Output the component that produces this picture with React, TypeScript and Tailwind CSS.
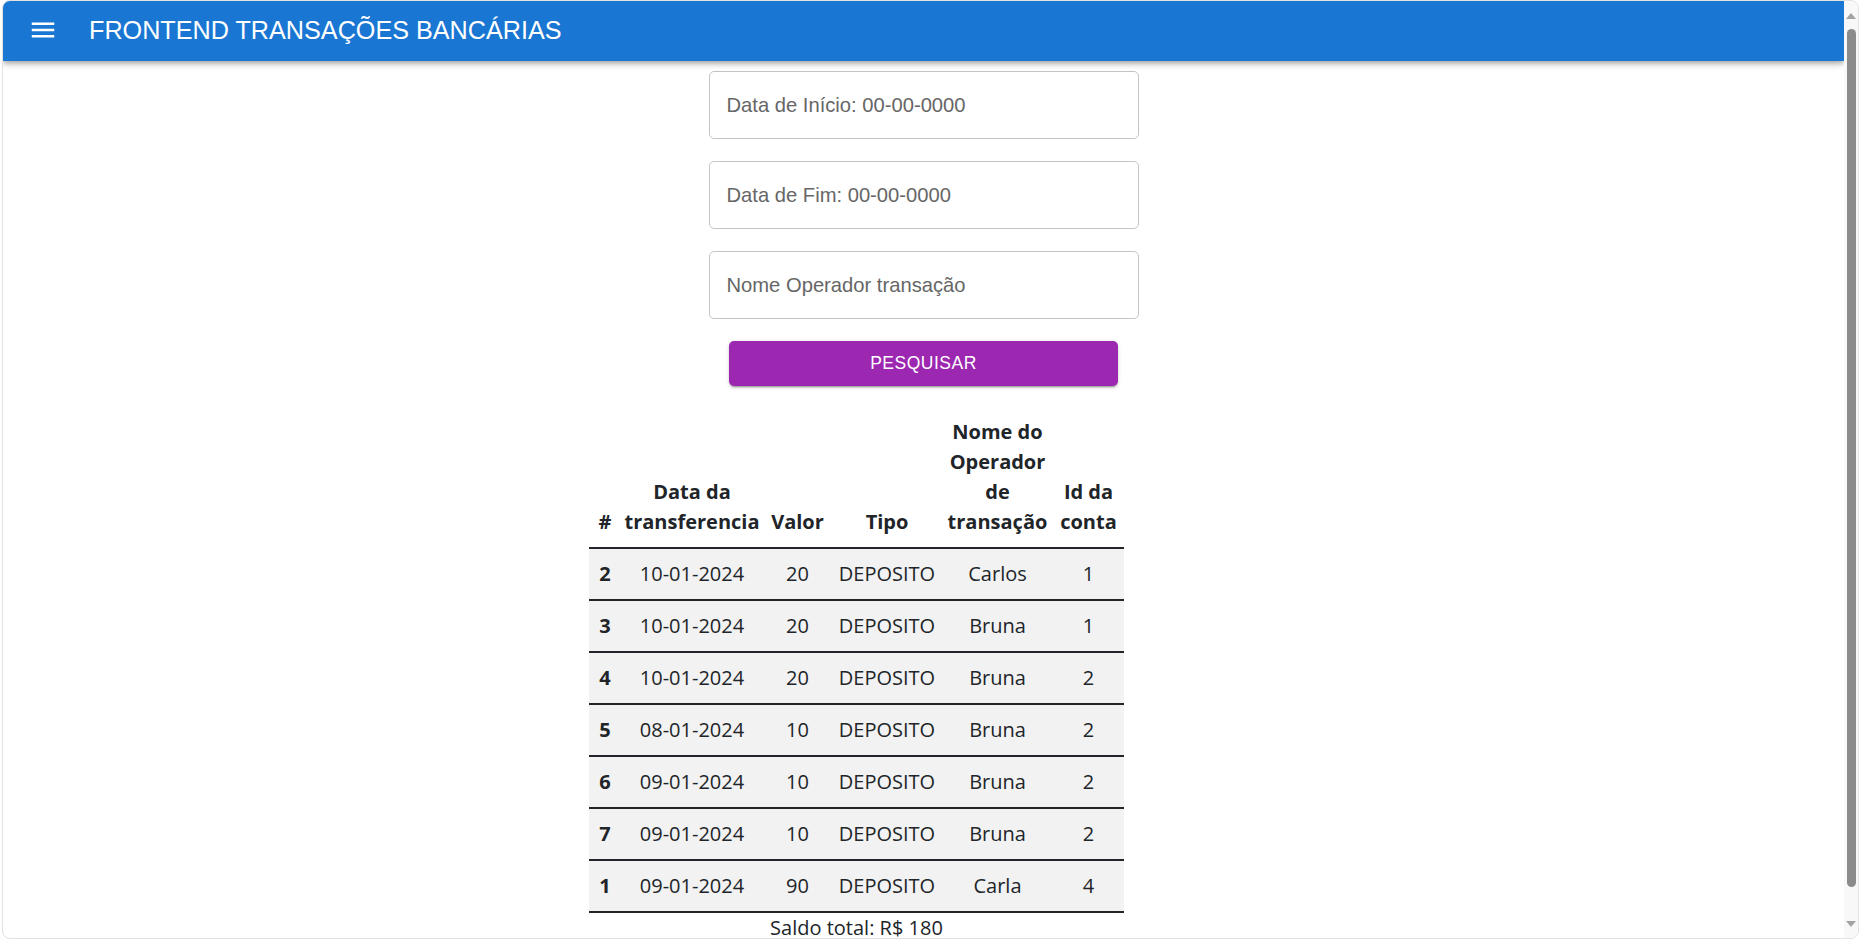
import React from "react";

type Transacao = {
  id: number;
  data: string;
  valor: number;
  tipo: string;
  operador: string;
  conta: number;
};

const transacoes: Transacao[] = [
  { id: 2, data: "10-01-2024", valor: 20, tipo: "DEPOSITO", operador: "Carlos", conta: 1 },
  { id: 3, data: "10-01-2024", valor: 20, tipo: "DEPOSITO", operador: "Bruna", conta: 1 },
  { id: 4, data: "10-01-2024", valor: 20, tipo: "DEPOSITO", operador: "Bruna", conta: 2 },
  { id: 5, data: "08-01-2024", valor: 10, tipo: "DEPOSITO", operador: "Bruna", conta: 2 },
  { id: 6, data: "09-01-2024", valor: 10, tipo: "DEPOSITO", operador: "Bruna", conta: 2 },
  { id: 7, data: "09-01-2024", valor: 10, tipo: "DEPOSITO", operador: "Bruna", conta: 2 },
  { id: 1, data: "09-01-2024", valor: 90, tipo: "DEPOSITO", operador: "Carla", conta: 4 },
];

const MenuIcon = () => (
  <svg viewBox="0 0 24 24" className="w-[30px] h-[30px]" fill="#ffffff">
    <path d="M3 18h18v-2H3zm0-5h18v-2H3zm0-7v2h18V6z" />
  </svg>
);

const Campo = ({ label }: { label: string }) => (
  <div className="w-[430px] h-[68px] rounded-[5px] border border-[#c4c4c4] flex items-center pl-[17px]">
    <span className="text-[20.2px] text-[#666666] font-['Liberation_Sans',Arial,sans-serif]">{label}</span>
  </div>
);

export default function App() {
  const total = transacoes.reduce((acc, t) => acc + t.valor, 0);

  return (
    <div className="h-[941px] w-[1860px] bg-white overflow-hidden">
      <div className="ml-[2px] h-[939px] w-[1857px] rounded-[8px] border border-[#e2e2e2] flex overflow-hidden bg-white">
        {/* conteúdo */}
        <div className="flex-1 flex flex-col overflow-hidden">
          <header className="h-[60px] shrink-0 bg-[#1976d2] flex items-center shadow-[0_2px_4px_-1px_rgba(0,0,0,0.2),0_4px_5px_0_rgba(0,0,0,0.14),0_1px_10px_0_rgba(0,0,0,0.12)] relative z-10">
            <div className="ml-[25px] mt-[-2px]">
              <MenuIcon />
            </div>
            <h1 className="ml-[31px] text-[25.2px] text-white font-['Liberation_Sans',Arial,sans-serif] leading-none">
              FRONTEND TRANSAÇÕES BANCÁRIAS
            </h1>
          </header>

          <div className="flex flex-col items-center pt-[10px] gap-[22px]">
            <Campo label="Data de Início: 00-00-0000" />
            <Campo label="Data de Fim: 00-00-0000" />
            <Campo label="Nome Operador transação" />
            <button className="w-[389px] h-[45px] rounded-[5px] bg-[#9c27b0] text-white text-[17.5px] tracking-[0.02857em] uppercase font-['Liberation_Sans',Arial,sans-serif] shadow-[0_3px_1px_-2px_rgba(0,0,0,0.2),0_2px_2px_0_rgba(0,0,0,0.14),0_1px_5px_0_rgba(0,0,0,0.12)]">
              Pesquisar
            </button>
          </div>

          <div className="ml-[586px] mt-[21px] w-[535px] font-['Open_Sans',sans-serif] text-[20px] leading-[30px] text-[#212529]">
            <table className="w-[535px] table-fixed border-collapse text-center">
              <colgroup>
                <col className="w-[32px]" />
                <col className="w-[142px]" />
                <col className="w-[69px]" />
                <col className="w-[110px]" />
                <col className="w-[111px]" />
                <col className="w-[71px]" />
              </colgroup>
              <thead>
                <tr className="border-b-2 border-[#212529]">
                  <th className="align-bottom py-[10px] font-bold">#</th>
                  <th className="align-bottom py-[10px] font-bold">Data da<br />transferencia</th>
                  <th className="align-bottom py-[10px] font-bold">Valor</th>
                  <th className="align-bottom py-[10px] font-bold">Tipo</th>
                  <th className="align-bottom py-[10px] font-bold">Nome do<br />Operador<br />de<br />transação</th>
                  <th className="align-bottom py-[10px] font-bold">Id da<br />conta</th>
                </tr>
              </thead>
              <tbody>
                {transacoes.map((t) => (
                  <tr key={t.id} className="bg-[#f2f2f2] border-b-2 border-[#212529]">
                    <th className="py-[10px] font-bold">{t.id}</th>
                    <td className="py-[10px]">{t.data}</td>
                    <td className="py-[10px]">{t.valor}</td>
                    <td className="py-[10px]">{t.tipo}</td>
                    <td className="py-[10px]">{t.operador}</td>
                    <td className="py-[10px]">{t.conta}</td>
                  </tr>
                ))}
              </tbody>
            </table>
            <p className="text-center">Saldo total: R$ {total}</p>
          </div>
        </div>

        {/* barra de rolagem */}
        <div className="w-[14px] shrink-0 bg-[#f8f8f8] flex flex-col items-center">
          <svg viewBox="0 0 10 6" className="mt-[12px] w-[10px] h-[6px]" fill="#a3a3a3">
            <path d="M0 6 L5 0 L10 6 Z" />
          </svg>
          <div className="mt-[10px] w-[9px] h-[858px] rounded-full bg-[#8b8b8b]" />
          <svg viewBox="0 0 10 6" className="mt-[34px] w-[10px] h-[6px]" fill="#a3a3a3">
            <path d="M0 0 L10 0 L5 6 Z" />
          </svg>
        </div>
      </div>
    </div>
  );
}
